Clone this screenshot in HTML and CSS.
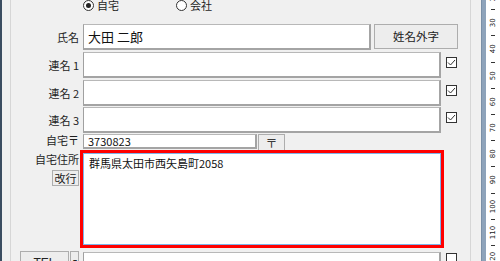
FILE: index.html
```html
<!DOCTYPE html>
<html lang="ja">
<head>
    <meta charset="UTF-8">
    <meta name="viewport" content="width=device-width, initial-scale=1.0">
    <title>顧客登録</title>
    <link rel="stylesheet" href="styles.css">
</head>
<body>
    <div class="window">
        <div class="group">
            <div class="row radios">
                <span class="lbl"></span>
                <span class="radio checked"><i></i>自宅</span>
                <span class="radio"><i></i>会社</span>
            </div>

            <div class="row name-row">
                <span class="lbl">氏名</span>
                <input type="text" class="field name" value="大田 二郎">
                <button class="btn gaiji">姓名外字</button>
            </div>

            <div class="row ren-row first">
                <span class="lbl">連名 1</span>
                <input type="text" class="field wide">
                <span class="check on"><svg viewBox="0 0 11 11" width="11" height="11"><path d="M2 5.5 L4.5 8 L9 3" fill="none" stroke="#333" stroke-width="1"/></svg></span>
            </div>
            <div class="row ren-row">
                <span class="lbl">連名 2</span>
                <input type="text" class="field wide">
                <span class="check on"><svg viewBox="0 0 11 11" width="11" height="11"><path d="M2 5.5 L4.5 8 L9 3" fill="none" stroke="#333" stroke-width="1"/></svg></span>
            </div>
            <div class="row ren-row last">
                <span class="lbl">連名 3</span>
                <input type="text" class="field wide">
                <span class="check on"><svg viewBox="0 0 11 11" width="11" height="11"><path d="M2 5.5 L4.5 8 L9 3" fill="none" stroke="#333" stroke-width="1"/></svg></span>
            </div>

            <div class="row zip-row">
                <span class="lbl">自宅〒</span>
                <input type="text" class="field zip" value="3730823">
                <button class="btn zip-btn">〒</button>
            </div>

            <div class="row addr-row">
                <div class="lbl addr-lbl">
                    <span>自宅住所</span>
                    <button class="btn kaigyo">改行</button>
                </div>
                <textarea class="addr">群馬県太田市西矢島町2058</textarea>
            </div>

            <div class="row tel-row">
                <div class="lbl tel-lbl">
                    <button class="btn tel">TEL</button>
                    <button class="btn drop">▾</button>
                </div>
                <input type="text" class="field wide tel-field">
                <span class="check"></span>
            </div>
        </div>

        <div class="bar"></div>
        <div class="ruler">
            <div class="cell"><b></b><span>20</span></div>
            <div class="cell"><b></b><span>30</span></div>
            <div class="cell"><b></b><span>40</span></div>
            <div class="cell"><b></b><span>50</span></div>
            <div class="cell"><b></b><span>60</span></div>
            <div class="cell"><b></b><span>70</span></div>
            <div class="cell"><b></b><span>80</span></div>
            <div class="cell"><b></b><span>90</span></div>
            <div class="cell"><b></b><span>100</span></div>
            <div class="cell"><b></b><span>110</span></div>
            <div class="cell"><b></b><span>120</span></div>
        </div>
    </div>
</body>
</html>
```

FILE: styles.css
```css
*{
    box-sizing: border-box;
}
body{
    margin: 0;
    width: 500px;
    height: 261px;
    overflow: hidden;
    background-color: #f0f0f0;
    font-family: "Noto Sans CJK JP", "Noto Sans", sans-serif;
    font-size: 11px;
    color: #1e1e1e;
}
.window{
    display: flex;
    height: 261px;
    overflow: hidden;
    border-left: 2px solid #3b4d61;
}
.group{
    width: 461px;
    flex-shrink: 0;
    margin-left: 8px;
    border-left: 1px solid #d6d6d6;
    border-right: 1px solid #d6d6d6;
    display: flex;
    flex-direction: column;
}
.row{
    display: flex;
    align-items: center;
    flex-shrink: 0;
}
.lbl{
    width: 68px;
    margin-right: 4px;
    flex-shrink: 0;
    text-align: right;
    line-height: 13px;
}

/* radio */
.radios{
    height: 24px;
    align-items: flex-start;
}
.radio{
    display: flex;
    align-items: center;
    gap: 3px;
    line-height: 11px;
}
.radio:first-of-type{
    margin-left: 9px;
}
.radio + .radio{
    margin-left: 57px;
}
.radio i{
    width: 11px;
    height: 11px;
    border: 1px solid #333;
    border-radius: 50%;
    background: #fff;
    display: flex;
    align-items: center;
    justify-content: center;
}
.radio.checked i::after{
    content: "";
    width: 5px;
    height: 5px;
    border-radius: 50%;
    background: #222;
}

/* inputs */
.field{
    height: 26px;
    margin: 0;
    padding: 0 4px;
    border-style: solid;
    border-width: 1px 2px 2px 1px;
    border-color: #b8b8b8 #a4a4a4 #a4a4a4 #a0a0a0;
    background: #fff;
    font-family: inherit;
    font-size: 11px;
    color: #111;
    outline: none;
}
.name{
    width: 288px;
    font-size: 13px;
}
.wide{
    width: 358px;
}
.btn{
    margin: 0;
    padding: 0;
    border: 1px solid #adadad;
    background: #ededed;
    font-family: inherit;
    font-size: 11px;
    color: #222;
    line-height: 1;
}
.gaiji{
    width: 84px;
    height: 25px;
    margin-left: 3px;
    align-self: flex-start;
    font-size: 11.5px;
}
.name-row{
    height: 26px;
}
.ren-row{
    height: 26px;
    margin-top: 2px;
}
.ren-row.last{
    margin-top: 1px;
}
.check{
    width: 11px;
    height: 11px;
    margin-left: 5px;
    align-self: flex-start;
    margin-top: 5px;
    border: 1px solid #333;
    background: #fff;
    display: flex;
}
.check svg{
    margin: -1px;
}

/* zip */
.zip-row{
    margin-top: 1px;
    height: 17px;
    align-items: flex-start;
}
.zip{
    width: 174px;
    height: 15px;
    padding: 0 4px;
    line-height: 13px;
}
.zip-btn{
    width: 27px;
    height: 17px;
    margin-left: 1px;
    font-size: 12px;
    color: #3a3a3a;
}

/* address */
.addr-row{
    margin-top: 2px;
    align-items: flex-start;
}
.addr-lbl{
    display: flex;
    flex-direction: column;
    align-items: flex-end;
}
.kaigyo{
    width: 27px;
    height: 16px;
    margin-top: 4px;
    font-size: 11px;
}
.addr{
    width: 358px;
    height: 92px;
    margin: 0;
    padding: 3px 5px;
    border: 1px solid #7eb4ea;
    outline: 3px solid #ff0000;
    resize: none;
    font-family: inherit;
    font-size: 11px;
    line-height: 13px;
    color: #111;
    background: #fff;
}

/* tel */
.tel-row{
    margin-top: 6px;
    align-items: flex-start;
}
.tel-lbl{
    display: flex;
    justify-content: flex-end;
    gap: 1px;
}
.tel{
    width: 49px;
    height: 20px;
    padding-top: 4px;
    font-family: "Liberation Sans", sans-serif;
    font-size: 12px;
    line-height: 1;
}
.drop{
    width: 9px;
    height: 20px;
    font-size: 8px;
}
.tel-field{
    margin-top: 1px;
}
.tel-row .check{
    margin-top: 2px;
}

/* side */
.bar{
    width: 5px;
    flex-shrink: 0;
    margin-left: 10px;
    background-color: #8ea3ba;
    border-left: 1px solid #7b90a7;
}
.ruler{
    width: 14px;
    flex-shrink: 0;
    background: #fff;
    margin-top: -17px;
    display: flex;
    flex-direction: column;
}
.cell{
    height: 26.2px;
    flex-shrink: 0;
    display: flex;
    flex-direction: column;
    align-items: center;
}
.cell b{
    width: 4px;
    height: 1px;
    background: #333;
}
.cell span{
    flex: 1;
    writing-mode: vertical-rl;
    transform: rotate(180deg);
    font-family: "DejaVu Sans", sans-serif;
    font-size: 7px;
    line-height: 8px;
    text-align: center;
    color: #222;
}
```
